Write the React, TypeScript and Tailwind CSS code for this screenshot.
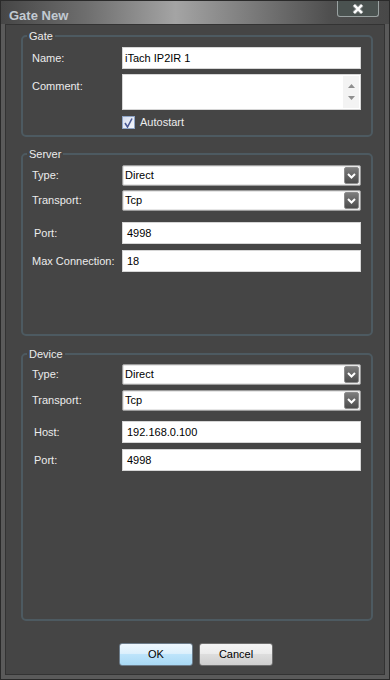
import React from "react";

const Chevron = () => (
  <svg width="9" height="6" viewBox="0 0 9 6">
    <path d="M1 1 L4.5 4.5 L8 1" fill="none" stroke="#ffffff" strokeWidth="2" />
  </svg>
);

const Select = ({ value }: { value: string }) => (
  <div className="w-[239px] h-[21px] flex items-center justify-between bg-white border border-[#9c9c9c] rounded-[2px] shadow-[inset_0_0_0_1px_#e6e6e6]">
    <span className="pl-[2px] text-[11px] text-black leading-none">{value}</span>
    <div className="mr-[1px] w-[15px] h-[17px] flex items-center justify-center rounded-[2px] border border-[#8c8c8c] bg-[linear-gradient(#7c7c7c,#4c4c4c)]">
      <Chevron />
    </div>
  </div>
);

const Input = ({ value }: { value: string }) => (
  <div className="w-[239px] h-[22px] flex items-center bg-white border border-[#d6d6d6]">
    <span className="pl-[4px] text-[11px] text-black leading-none">{value}</span>
  </div>
);

const Row = ({ label, indent = false, children }: { label: string; indent?: boolean; children: React.ReactNode }) => (
  <div className="flex items-center">
    <span className={`w-[90px] text-[11px] text-[#ececec] leading-none ${indent ? "pl-[2px]" : ""}`}>{label}</span>
    {children}
  </div>
);

const Group = ({ title, className, children }: { title: string; className: string; children: React.ReactNode }) => (
  <div className={`relative ml-[15px] mr-[11px] border-2 border-[#4d5a61] rounded-[5px] pl-[9px] ${className}`}>
    <span className="absolute -top-[8px] left-[4px] bg-[#454545] px-[2px] text-[11px] text-[#ececec] leading-[14px]">{title}</span>
    {children}
  </div>
);

export default function App() {
  return (
    <div className="w-[390px] h-[680px] flex flex-col bg-[#5a5a5a] border border-[#2a2a2a] font-['Liberation_Sans',Arial,sans-serif]">
      <div className="relative h-[23px] flex items-center bg-[linear-gradient(90deg,#464646_0%,#6e6e6e_22%,#a4a4a4_45%,#7a7a7a_65%,#4e4e4e_85%,#484848_100%)]">
        <span className="pl-[8px] pt-[6px] text-[13px] font-bold text-[#c2cad2]">Gate New</span>
        <div className="absolute right-[10px] top-0 w-[42px] h-[16px] flex items-center justify-center bg-[#4a5250] border border-t-0 border-[#9aa2a2] rounded-b-[3px]">
          <svg width="12" height="10" viewBox="0 0 12 10">
            <path d="M2 1 L10 9 M10 1 L2 9" stroke="#8a9090" strokeWidth="4" />
            <path d="M2 1 L10 9 M10 1 L2 9" stroke="#ffffff" strokeWidth="2.4" />
          </svg>
        </div>
      </div>

      <div className="flex-1 mx-[4px] mb-[4px] flex flex-col bg-[#454545] border border-[#333333]">
        <Group title="Gate" className="mt-[10px] h-[102px] pt-[10px]">
          <Row label="Name:">
            <div className="w-[239px] h-[22px] flex items-center bg-white border border-[#d6d6d6]">
              <span className="pl-[2px] text-[11px] text-black leading-none">iTach IP2IR 1</span>
            </div>
          </Row>
          <div className="mt-[5px] flex items-start">
            <span className="w-[90px] pt-[7px] text-[11px] text-[#ececec] leading-none">Comment:</span>
            <div className="w-[239px] h-[36px] flex justify-end bg-white border border-[#d6d6d6]">
              <div className="my-[1px] mr-[1px] w-[16px] flex flex-col items-center justify-between py-[8px] bg-[#f3f3f3]">
                <svg width="7" height="4" viewBox="0 0 7 4"><path d="M0 4 L3.5 0 L7 4 Z" fill="#8e8e8e" /></svg>
                <svg width="7" height="4" viewBox="0 0 7 4"><path d="M0 0 L3.5 4 L7 0 Z" fill="#8e8e8e" /></svg>
              </div>
            </div>
          </div>
          <div className="mt-[6px] ml-[90px] flex items-center">
            <div className="w-[13px] h-[13px] flex items-center justify-center border border-[#8ea4c6] bg-[linear-gradient(135deg,#d4ddf0,#f6f8fc)]">
              <svg width="9" height="10" viewBox="0 0 9 10">
                <path d="M1 5 L3.5 9 L8 0.5" fill="none" stroke="#4a5a96" strokeWidth="1.6" />
              </svg>
            </div>
            <span className="ml-[5px] text-[11px] text-[#ececec] leading-none">Autostart</span>
          </div>
        </Group>

        <Group title="Server" className="mt-[16px] h-[183px] pt-[10px]">
          <Row label="Type:"><Select value="Direct" /></Row>
          <div className="mt-[4px]"><Row label="Transport:"><Select value="Tcp" /></Row></div>
          <div className="mt-[11px]"><Row label="Port:" indent><Input value="4998" /></Row></div>
          <div className="mt-[6px]"><Row label="Max Connection:"><Input value="18" /></Row></div>
        </Group>

        <Group title="Device" className="mt-[17px] h-[268px] pt-[9px]">
          <Row label="Type:"><Select value="Direct" /></Row>
          <div className="mt-[5px]"><Row label="Transport:"><Select value="Tcp" /></Row></div>
          <div className="mt-[10px]"><Row label="Host:" indent><Input value="192.168.0.100" /></Row></div>
          <div className="mt-[6px]"><Row label="Port:" indent><Input value="4998" /></Row></div>
        </Group>

        <div className="mt-[22px] flex justify-center gap-[6px] pl-[2px]">
          <button className="w-[74px] h-[23px] flex items-center justify-center rounded-[3px] border border-[#6d7d8b] bg-[linear-gradient(#eef7fd_0%,#dcf0fc_45%,#bde4fb_50%,#a9d9f4_100%)] text-[11px] text-black">
            OK
          </button>
          <button className="w-[74px] h-[23px] flex items-center justify-center rounded-[3px] border border-[#707070] bg-[linear-gradient(#f4f4f4_0%,#ececec_45%,#dddddd_50%,#cfcfcf_100%)] text-[11px] text-black">
            Cancel
          </button>
        </div>
      </div>
    </div>
  );
}
